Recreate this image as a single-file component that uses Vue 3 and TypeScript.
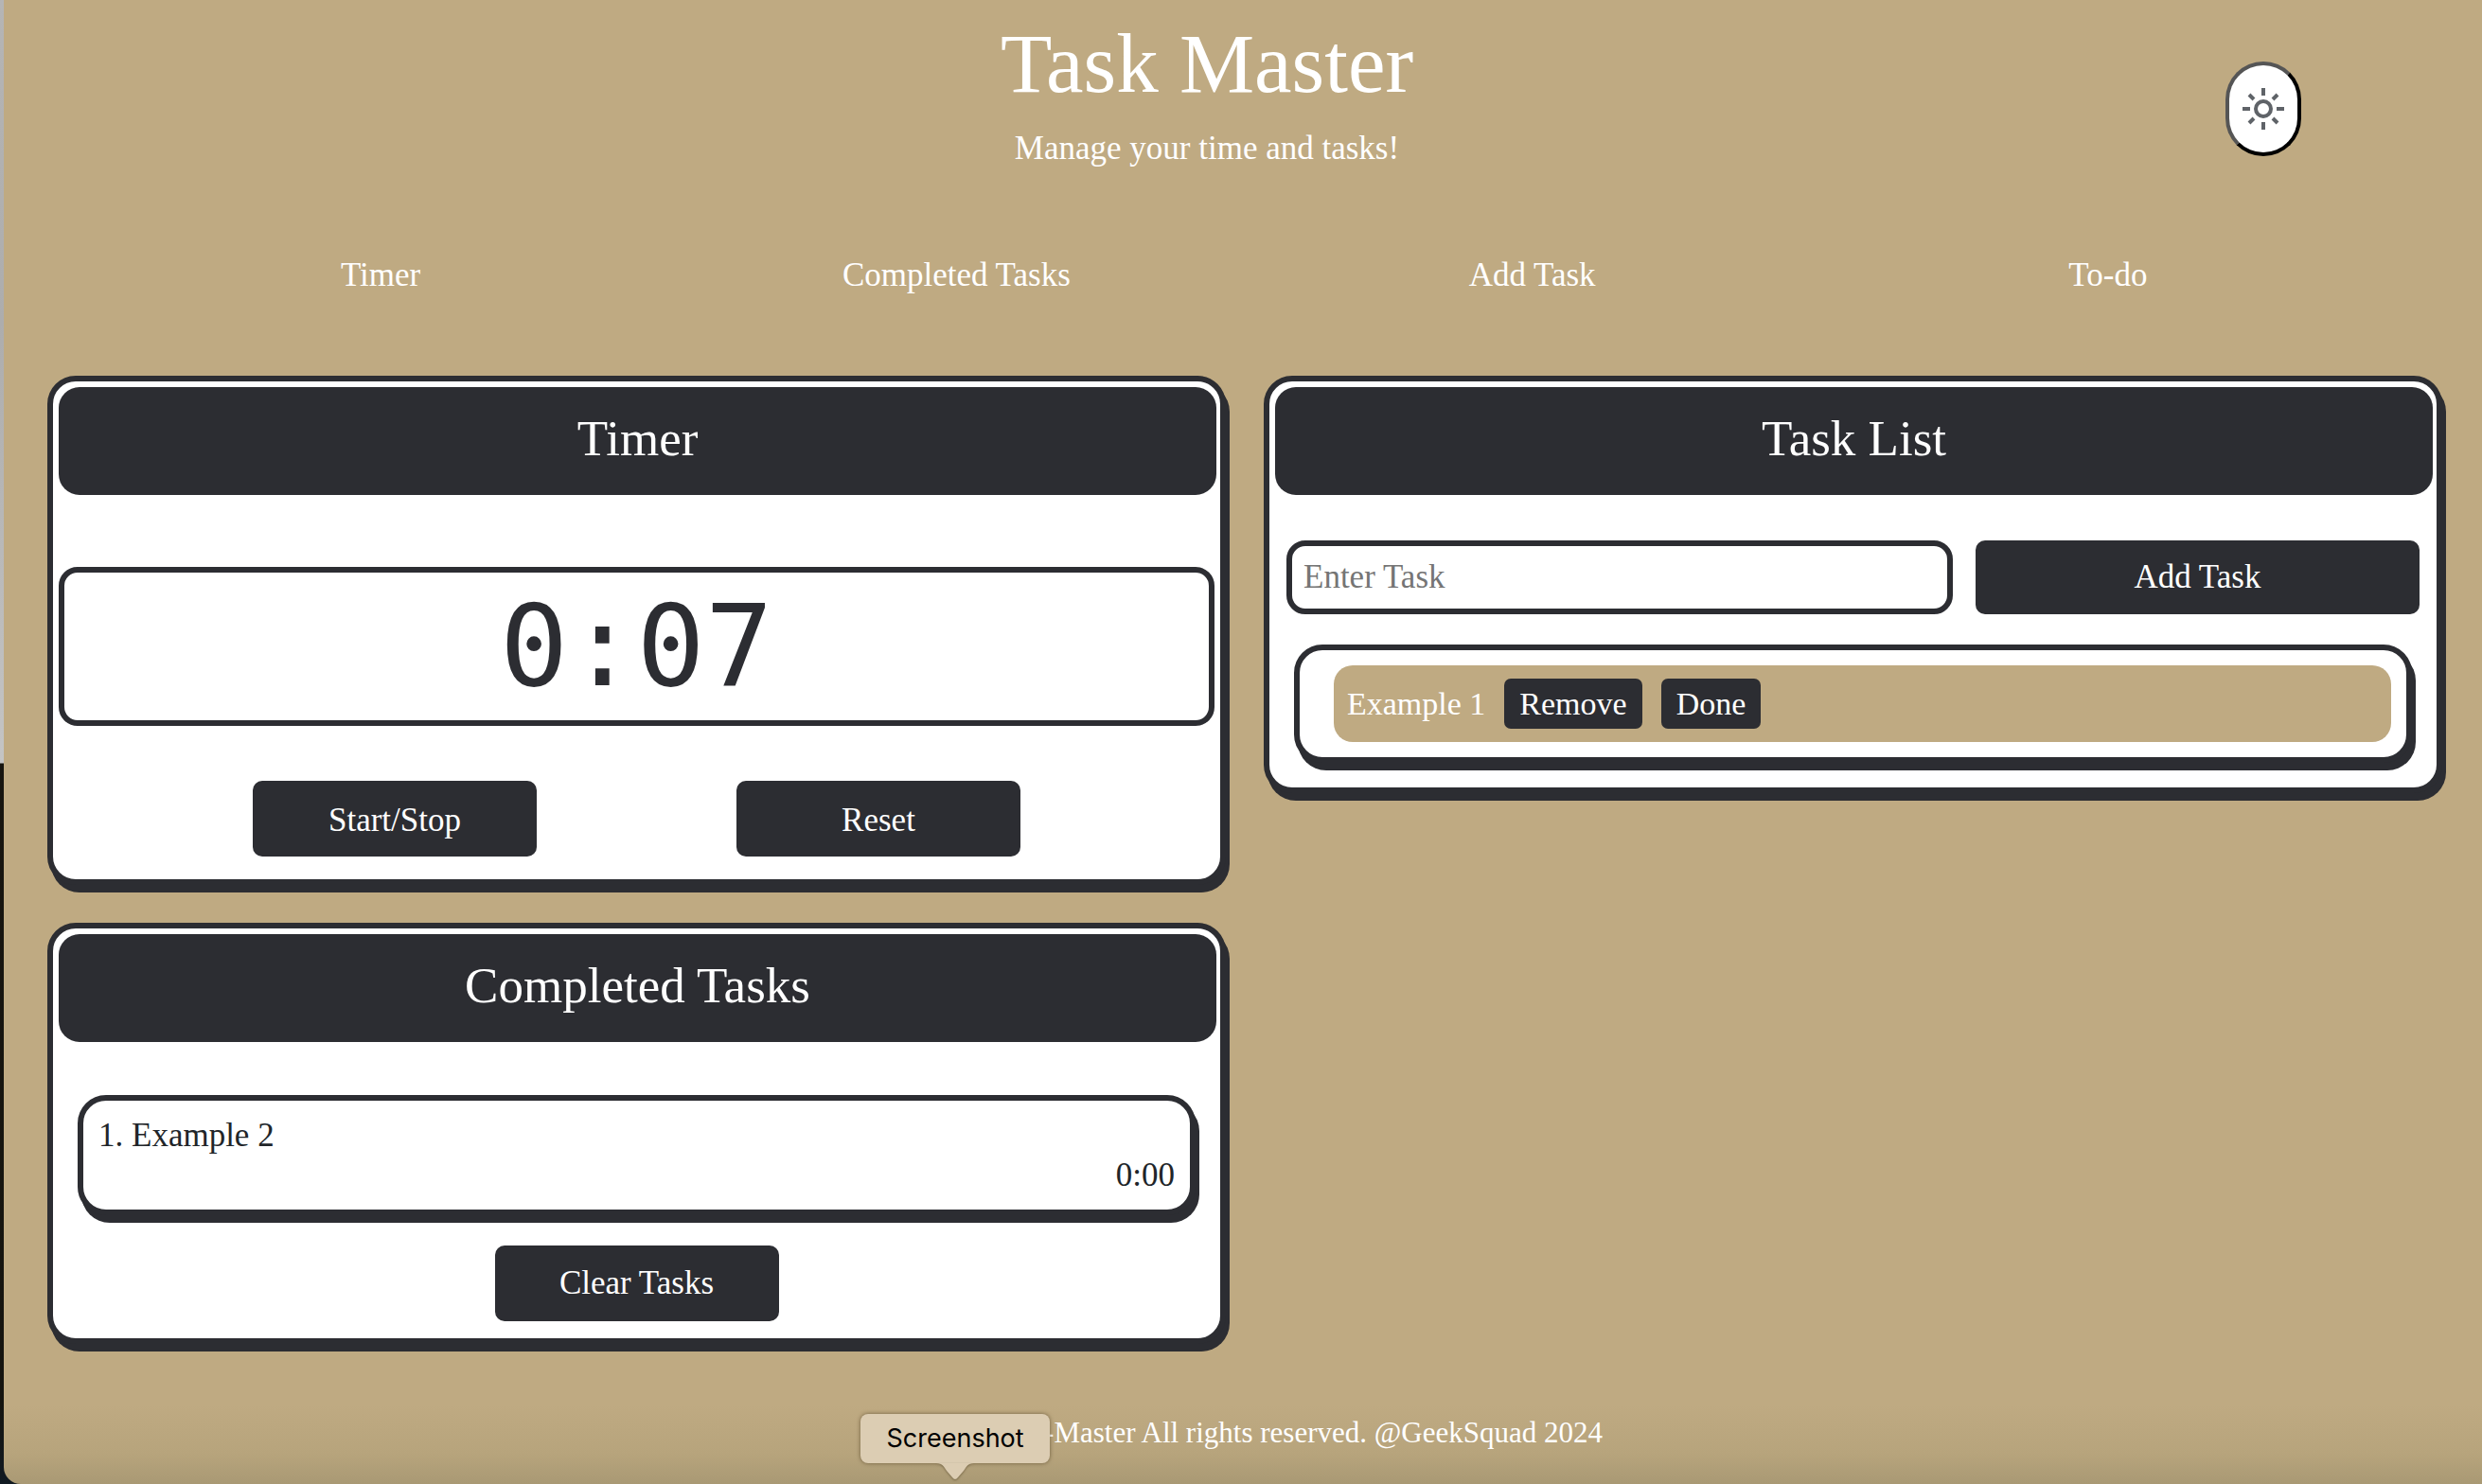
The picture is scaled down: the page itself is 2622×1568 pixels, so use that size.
<script setup lang="ts">
import { ref } from 'vue'

interface Task {
  name: string
  time: string
}

const links = [
  { label: 'Timer', href: '#timer' },
  { label: 'Completed Tasks', href: '#completed' },
  { label: 'Add Task', href: '#new-task' },
  { label: 'To-do', href: '#todo' },
]

const seconds = ref(7)
const draft = ref('')
const tasks = ref<Task[]>([{ name: 'Example 1', time: '0:00' }])
const completed = ref<Task[]>([{ name: 'Example 2', time: '0:00' }])
let handle: number | undefined

function clock(total: number): string {
  return `${Math.floor(total / 60)}:${String(total % 60).padStart(2, '0')}`
}

function toggleTimer() {
  if (handle !== undefined) {
    window.clearInterval(handle)
    handle = undefined
  } else {
    handle = window.setInterval(() => seconds.value++, 1000)
  }
}

function addTask() {
  const name = draft.value.trim()
  if (!name) return
  tasks.value.push({ name, time: '0:00' })
  draft.value = ''
}

function removeTask(index: number) {
  tasks.value.splice(index, 1)
}

function finishTask(index: number) {
  const [task] = tasks.value.splice(index, 1)
  completed.value.push({ name: task.name, time: clock(seconds.value) })
}
</script>

<template>
  <div class="desktop">
    <div class="page">
      <header class="masthead">
        <div class="titles">
          <h1>Task Master</h1>
          <p>Manage your time and tasks!</p>
        </div>
        <button class="theme" type="button" aria-label="Toggle theme">
          <svg width="48" height="48" viewBox="-24 -24 48 48" fill="none" stroke="#5f6368" stroke-width="4" aria-hidden="true">
            <circle r="8" />
            <path d="M0-22v8M0 14v8M-22 0h8M14 0h8M-15-15l5 5M15-15l-5 5M-15 15l5-5M15 15l-5-5" />
          </svg>
        </button>
      </header>

      <nav class="links">
        <a v-for="link in links" :key="link.href" :href="link.href">{{ link.label }}</a>
      </nav>

      <main class="board">
        <div class="column">
          <section id="timer" class="card">
            <h2>Timer</h2>
            <div class="clock">{{ clock(seconds) }}</div>
            <div class="actions">
              <button class="btn" type="button" @click="toggleTimer">Start/Stop</button>
              <button class="btn" type="button" @click="seconds = 0">Reset</button>
            </div>
          </section>

          <section id="completed" class="card done-card">
            <h2>Completed Tasks</h2>
            <div class="panel done-list">
              <div v-for="(task, i) in completed" :key="i">
                <div>{{ i + 1 }}. {{ task.name }}</div>
                <div class="spent">{{ task.time }}</div>
              </div>
            </div>
            <button class="btn clear" type="button" @click="completed = []">Clear Tasks</button>
          </section>
        </div>

        <div class="column">
          <section id="todo" class="card list-card">
            <h2>Task List</h2>
            <form class="entry" @submit.prevent="addTask">
              <input id="new-task" v-model="draft" type="text" placeholder="Enter Task" aria-label="Enter Task" />
              <button class="btn" type="submit">Add Task</button>
            </form>
            <ul class="panel todo-list">
              <li v-for="(task, i) in tasks" :key="i">
                <span>{{ task.name }}</span>
                <button class="btn small" type="button" @click="removeTask(i)">Remove</button>
                <button class="btn small" type="button" @click="finishTask(i)">Done</button>
              </li>
            </ul>
          </section>
        </div>
      </main>

      <footer class="footer">
        <div class="tip" role="tooltip">
          Screenshot
          <svg class="tail" width="40" height="18" viewBox="0 0 40 18" aria-hidden="true">
            <path d="M0 0C7 0 8 4 11 8L17 15Q20 19 23 15L29 8C32 4 33 0 40 0Z" fill="#dccdb3" />
          </svg>
        </div>
        <span class="rights">-Master All rights reserved. @GeekSquad 2024</span>
      </footer>
    </div>
  </div>
</template>

<style>
body {
  margin: 0;
}
</style>

<style scoped>
* {
  box-sizing: border-box;
}

.desktop {
  min-height: 100vh;
  padding-left: 4px;
  background: linear-gradient(#b5b5b5, #adadad 340px, #c4c4c4 806px, #17150f 807px, #15140f 1480px, #111a22);
  display: flex;
}

.page {
  flex: 1;
  display: flex;
  flex-direction: column;
  border-bottom-left-radius: 18px;
  background: linear-gradient(to top, #a99974, #b7a47c 32px, #bfaa82 84px);
  color: #fff;
  font-family: Georgia, "Liberation Serif", serif;
  font-size: 35px;
  line-height: 42px;
}

h1,
h2,
p,
ul {
  margin: 0;
  font-weight: 400;
}

.masthead {
  display: flex;
  align-items: flex-start;
  padding: 16px 191px 0 195px;
}

.titles {
  flex: 1;
  text-align: center;
}

h1 {
  font-size: 89px;
  line-height: 102px;
}

.titles p {
  margin-top: 18px;
}

.theme {
  display: flex;
  align-items: center;
  justify-content: center;
  width: 80px;
  height: 100px;
  margin-top: 49px;
  padding: 0;
  border: 4px solid;
  border-color: #555 #000 #000 #555;
  border-radius: 40px;
  background: #fff;
}

.links {
  display: grid;
  grid-template-columns: repeat(4, 1fr);
  margin-top: 92px;
  padding: 0 91px 0 94px;
  text-align: center;
}

.links a {
  color: #fff;
  text-decoration: none;
}

.board {
  display: grid;
  grid-template-columns: 1fr 1fr;
  gap: 40px;
  align-items: start;
  margin-top: 85px;
  padding: 0 42px 0 46px;
}

.column {
  display: flex;
  flex-direction: column;
  gap: 40px;
}

.card,
.panel {
  border: 6px solid #2c2d32;
  border-radius: 30px;
  background: #fff;
  box-shadow: 4px 8px 0 #2c2d32;
}

.card {
  display: flex;
  flex-direction: column;
  padding: 6px 6px 24px;
}

.card h2 {
  margin-right: -2px;
  padding: 22px 0 28px;
  border-radius: 22px;
  background: #2c2d32;
  font-size: 53px;
  line-height: 64px;
  text-align: center;
}

.clock {
  margin-top: 76px;
  border: 6px solid #2c2d32;
  border-radius: 20px;
  color: #2c2d32;
  font-family: "DejaVu Sans Mono", monospace;
  font-size: 120px;
  line-height: 156px;
  text-align: center;
}

.btn {
  width: 300px;
  height: 80px;
  padding: 0;
  border: 0;
  border-radius: 10px;
  background: #2c2d32;
  color: #fff;
  font: inherit;
}

.actions {
  display: flex;
  justify-content: center;
  gap: 211px;
  margin-top: 58px;
}

.actions .btn {
  padding-top: 4px;
}

.done-card {
  padding-bottom: 18px;
}

.done-list {
  margin: 56px 20px 32px;
  padding: 16px 16px 15px;
  color: #212529;
}

.spent {
  text-align: right;
}

.clear {
  align-self: center;
}

.list-card {
  padding-bottom: 26px;
}

.entry {
  display: grid;
  grid-template-columns: 3fr 2fr;
  gap: 24px;
  margin: 48px 12px 32px;
}

.entry input {
  min-width: 0;
  height: 78px;
  padding: 0 12px;
  border: 6px solid #2c2d32;
  border-radius: 20px;
  background: #fff;
  color: #212529;
  font: inherit;
}

.entry input::placeholder {
  color: #757575;
}

.entry .btn {
  width: auto;
  height: auto;
}

.todo-list {
  margin: 0 20px;
  padding: 16px 16px 16px 36px;
  font-size: 34px;
  list-style: none;
}

.todo-list li {
  display: flex;
  align-items: center;
  gap: 20px;
  padding: 14px;
  border-radius: 20px;
  background: #bfaa82;
}

.small {
  width: auto;
  height: 53px;
  padding: 0 16px;
  border-radius: 7px;
}

.footer {
  display: flex;
  justify-content: center;
  align-items: flex-start;
  margin-top: 74px;
  padding-right: 24px;
  font-size: 31px;
}

.tip {
  position: relative;
  width: 200px;
  height: 52px;
  border-radius: 8px;
  background: #dccdb3;
  box-shadow: 0 0 4px rgba(60, 45, 20, 0.6);
  color: #000;
  font-family: Inter, sans-serif;
  font-size: 27px;
  line-height: 52px;
  text-align: center;
  z-index: 1;
}

.tail {
  position: absolute;
  top: 100%;
  left: 80px;
  filter: drop-shadow(0 1px 1px rgba(60, 45, 20, 0.5));
}

.rights {
  margin-left: -6px;
  line-height: 40px;
}
</style>
